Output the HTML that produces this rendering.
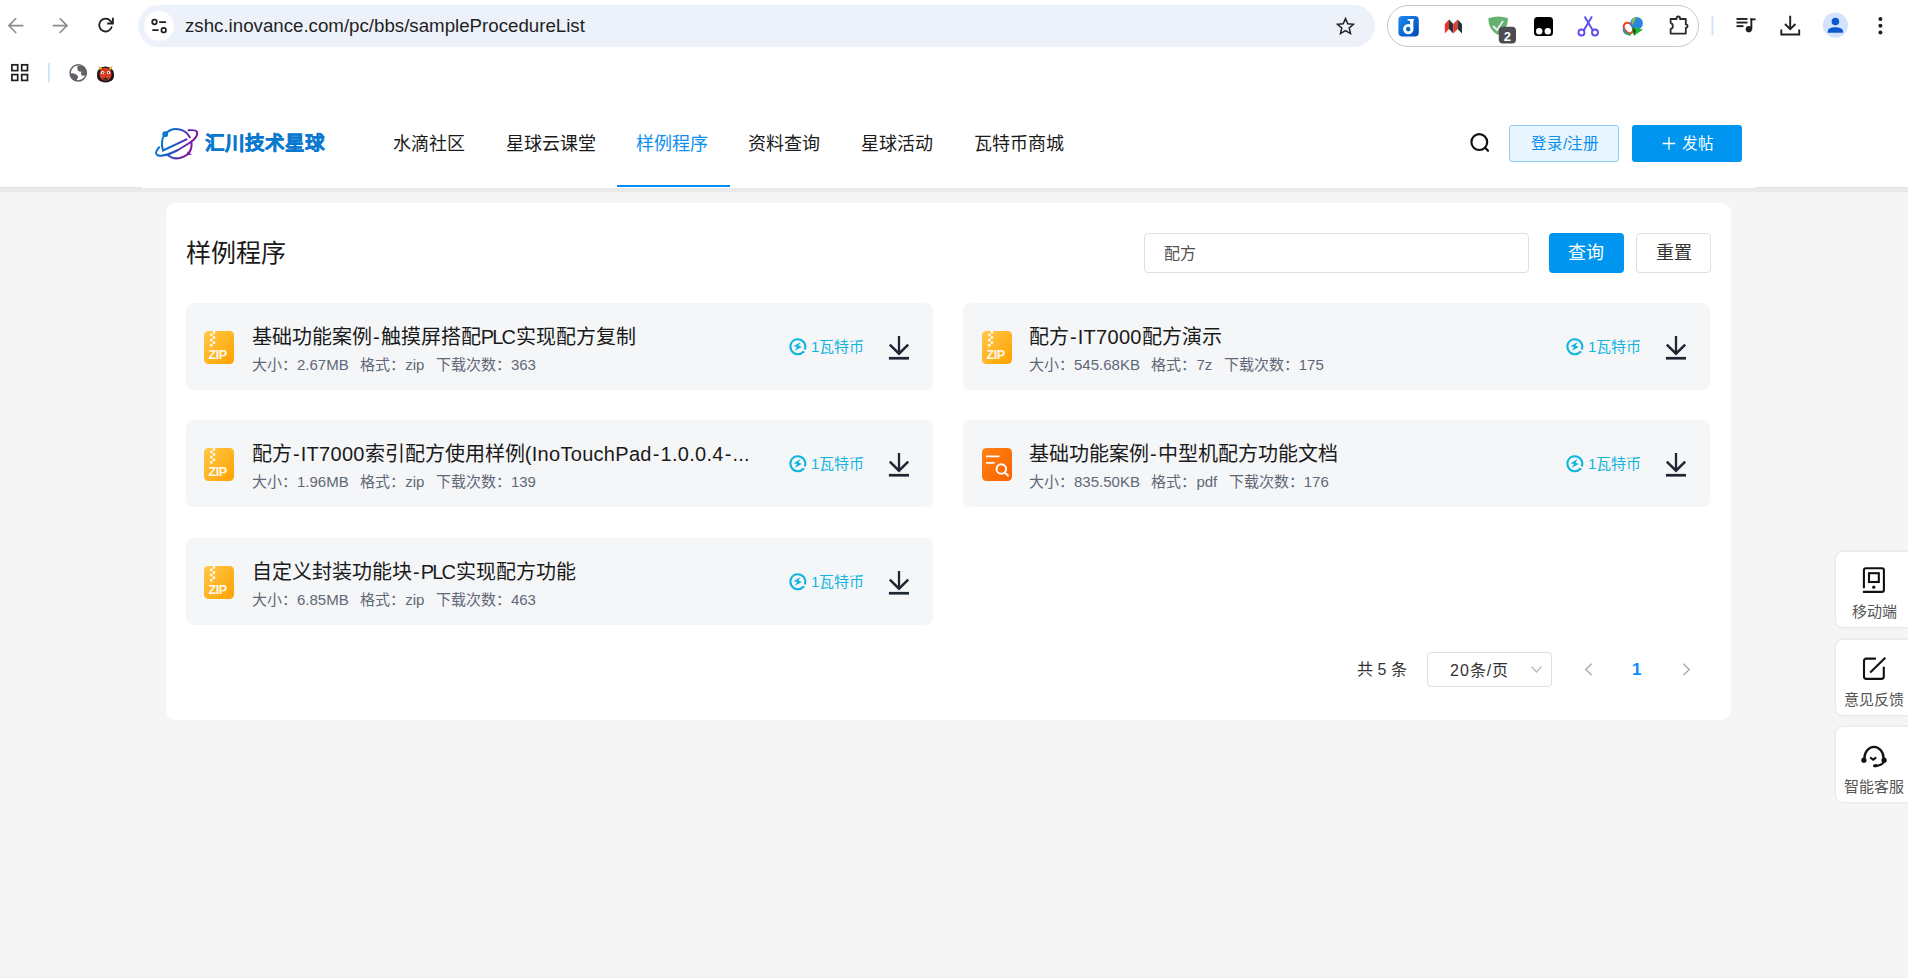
<!DOCTYPE html>
<html lang="zh-CN"><head><meta charset="utf-8">
<style>
*{margin:0;padding:0;box-sizing:border-box}
html,body{width:1908px;height:978px;overflow:hidden;background:#f5f5f5;font-family:"Liberation Sans",sans-serif;color:#1a1a1a}
.a{position:absolute}
.nw{white-space:nowrap}
#chrome{left:0;top:0;width:1908px;height:88px;background:#fff}
#hdr{left:0;top:88px;width:1908px;height:100px;background:#fff;border-bottom:1px solid #e2e2e2}
#hdrin{left:142px;top:88px;width:1613px;height:100px;background:#fff}
#band{left:0;top:188px;width:1908px;height:4px;background:#eaeaea}
.nav{top:132px;font-size:18px;line-height:24px;color:#1a1a1a}
#card{left:166px;top:203px;width:1565px;height:517px;background:#fff;border-radius:10px}
.item{width:747px;height:87px;background:#f5f6f8;border-radius:8px}
.ttl{font-size:20px;line-height:26px;color:#1a1a1a}
.lt{letter-spacing:0.3px}
.hy{margin:0 1px}
.plc{letter-spacing:-1.8px;margin-right:1.5px}
.meta{font-size:15px;line-height:20px;color:#5f6877}
.coin{font-size:15px;color:#12b4de}
.side{left:1835px;width:90px;height:77px;background:#fff;border-radius:8px;border:1px solid #e9e9e9;box-shadow:0 0 3px rgba(0,0,0,0.04)}
</style></head><body>
<div id="chrome" class="a">
<svg class="a" style="left:0;top:0" width="1908" height="88" viewBox="0 0 1908 88">
  <!-- back / forward -->
  <g fill="none" stroke="#8c8c8c" stroke-width="1.6" stroke-linecap="square">
    <path d="M9 25.6H22.5M15.6 18.8L9 25.6L15.6 32.4"/>
    <path d="M53.5 25.6H67M60.2 18.8L67 25.6L60.2 32.4"/>
  </g>
  <!-- reload -->
  <g fill="none" stroke="#1f1f1f" stroke-width="1.8">
    <path d="M111.9 26.4A6.4 6.4 0 1 1 110.4 20.8L112.6 23"/>
    <path d="M107.2 23.5H112.9V17.8"/>
  </g>
  <rect x="138" y="5" width="1237" height="42" rx="21" fill="#edf2fa"/>
  <circle cx="159" cy="26" r="15" fill="#fff"/>
  <g fill="none" stroke="#1f1f1f" stroke-width="1.7">
    <circle cx="154.5" cy="22" r="2.3"/>
    <circle cx="163.7" cy="30.2" r="2.3"/>
    <path d="M159.2 22.2H166M152.3 30.2H158.6"/>
  </g>
  <!-- star -->
  <g transform="translate(1345.5 26.3) scale(0.95) translate(-1345.5 -26.3)"><path d="M1345.5 18.2L1347.9 23.7L1353.9 24.2L1349.4 28.1L1350.8 34L1345.5 30.9L1340.2 34L1341.6 28.1L1337.1 24.2L1343.1 23.7Z" fill="none" stroke="#1f1f1f" stroke-width="1.55" stroke-linejoin="miter"/></g>
  <!-- extensions pill -->
  <rect x="1387.5" y="5.5" width="311" height="41" rx="20.5" fill="none" stroke="#c7c7c7" stroke-width="1"/>
  <!-- J -->
  <defs><linearGradient id="jg" x1="0" y1="0" x2="1" y2="1"><stop offset="0" stop-color="#1d8cf0"/><stop offset="1" stop-color="#0048b8"/></linearGradient></defs>
  <rect x="1398.4" y="16" width="20.4" height="20.6" rx="4" fill="url(#jg)"/>
  <circle cx="1408.3" cy="29.1" r="3.8" fill="none" stroke="#fff" stroke-width="2.8"/>
  <rect x="1410" y="19" width="3.3" height="10" fill="#fff"/>
  <rect x="1407.6" y="19" width="6.3" height="1.7" fill="#fff"/>
  <!-- M -->
  <path d="M1444.8 33.5L1444.8 24L1449 19.5L1449 29Z" fill="#e8382d"/>
  <path d="M1449 19.5L1453.3 24L1453.3 33.5L1449 29Z" fill="#2b2f38"/>
  <path d="M1453.3 24L1457.6 19.5L1457.6 29L1453.3 33.5Z" fill="#e8382d"/>
  <path d="M1457.6 19.5L1462 24L1462 33.5L1457.6 29Z" fill="#2b2f38"/>
  <!-- shield -->
  <path d="M1488.3 18.3Q1498 14.8 1508 18.3Q1508 30 1498 35Q1488.3 30 1488.3 18.3Z" fill="#66b16f"/>
  <path d="M1493 26L1497 30L1503 21" fill="none" stroke="#e9f3ea" stroke-width="1.8"/>
  <rect x="1498.8" y="26.8" width="17.2" height="16.8" rx="4" fill="#4b4d52"/>
  <text x="1507.4" y="40.8" font-family="Liberation Sans" font-weight="bold" font-size="13" fill="#fff" text-anchor="middle">2</text>
  <!-- tampermonkey -->
  <rect x="1534" y="17" width="19" height="19" rx="3.5" fill="#000"/>
  <circle cx="1539.2" cy="31.2" r="3.2" fill="#fff"/>
  <circle cx="1547.8" cy="31.2" r="3.2" fill="#fff"/>
  <!-- scissors -->
  <g fill="none" stroke="#5b4cf5" stroke-width="1.9">
    <circle cx="1581.5" cy="32.5" r="3"/>
    <circle cx="1595" cy="32.5" r="3"/>
    <path d="M1583.8 30.2L1592 16.4M1592.8 30.2L1584.6 16.4"/>
  </g>
  <!-- IDM -->
  <ellipse cx="1628.5" cy="28" rx="4.2" ry="5.6" transform="rotate(-35 1628.5 28)" fill="none" stroke="#e8451c" stroke-width="2.2"/>
  <path d="M1623.5 30Q1625 34.5 1631 34.6" fill="none" stroke="#2bb24c" stroke-width="2.2"/>
  <path d="M1623.4 27.5Q1623 32 1628 34" fill="none" stroke="#3a7be0" stroke-width="1.2"/>
  <circle cx="1636.6" cy="23.3" r="6.3" fill="#2f86de"/>
  <path d="M1631.5 21Q1633 17.5 1636.5 17.2Q1634.5 21 1632.5 25Z" fill="#8cbf3a"/>
  <path d="M1632.3 27L1643 29.5L1634 35.8Z" fill="#1fb82e"/>
  <path d="M1632.3 27L1636 30.5L1634 35.8Z" fill="#0a5a14"/>
  <!-- puzzle -->
  <path d="M1670.6 19H1676.6V18.2A1.7 1.7 0 0 1 1680 18.2V19H1685.8V24.4A1.7 1.7 0 0 1 1685.8 27.8V33.6H1670.6V29.2A3.4 3.4 0 0 0 1670.6 22.8Z" fill="none" stroke="#2a2a2a" stroke-width="1.8" stroke-linejoin="round"/>
  <!-- separator -->
  <rect x="1711.5" y="16" width="2" height="19.5" rx="1" fill="#d3e3fd"/>
  <!-- queue music -->
  <g fill="#1f1f1f">
    <rect x="1736.5" y="18" width="11" height="1.9"/>
    <rect x="1736.5" y="21.6" width="11" height="1.9"/>
    <rect x="1736.5" y="25.2" width="7" height="1.9"/>
    <rect x="1750.4" y="18.4" width="1.9" height="11"/>
    <rect x="1750.4" y="18.4" width="5.2" height="1.9"/>
    <circle cx="1748.8" cy="29.2" r="3.1"/>
  </g>
  <!-- download -->
  <g fill="none" stroke="#1f1f1f" stroke-width="1.9">
    <path d="M1790.2 15.8V29M1785 24L1790.2 29.2L1795.4 24"/>
    <path d="M1781.3 29.5V34.5H1799.2V29.5"/>
  </g>
  <!-- profile -->
  <circle cx="1835.4" cy="25.2" r="12.6" fill="#d3e3fd"/>
  <circle cx="1835.4" cy="21.5" r="3.8" fill="#0b57d0"/>
  <path d="M1827.8 32.8V31.2Q1827.8 27.6 1835.4 27.3Q1843 27.6 1843 31.2V32.8Z" fill="#0b57d0"/>
  <!-- menu -->
  <g fill="#1f1f1f"><circle cx="1880.4" cy="19" r="2"/><circle cx="1880.4" cy="25.8" r="2"/><circle cx="1880.4" cy="32.6" r="2"/></g>
  <!-- bookmarks bar -->
  <g fill="none" stroke="#1f1f1f" stroke-width="1.7">
    <rect x="11.9" y="64.8" width="5.8" height="5.8"/>
    <rect x="21.7" y="64.8" width="5.8" height="5.8"/>
    <rect x="11.9" y="74.6" width="5.8" height="5.8"/>
    <rect x="21.7" y="74.6" width="5.8" height="5.8"/>
  </g>
  <rect x="48" y="63" width="2" height="19.5" rx="1" fill="#d3e3fd"/>
  <circle cx="78.2" cy="72.9" r="8.1" fill="#fff" stroke="#5f6368" stroke-width="1.5"/>
  <path d="M77.2 66.6Q80.5 64.8 84.2 66.6Q86.6 69.5 86.4 74.8Q84.2 76.2 81.6 75.4Q80.2 73.6 81.6 71.8Q79.2 71.8 77.6 70.2Z" fill="#5f6368"/>
  <path d="M70.2 73.4Q73.2 72.6 76.2 74.4Q78.6 75.8 78.2 77.8Q76.4 78.6 76.8 81.2Q72.2 80.6 70.2 76.6Z" fill="#5f6368"/>
  <path d="M97 74Q97.5 67 105.5 66.5Q113.5 67 114 74Q114.5 80 110 81.5Q105.5 83.5 101 81.5Q96.5 80 97 74Z" fill="#1a1a1a"/>
  <path d="M98.5 66L100 70.5L102.5 68.5ZM112.5 66L111 70.5L108.5 68.5Z" fill="#e6a820"/>
  <ellipse cx="105.5" cy="74.2" rx="6" ry="6.4" fill="#e23a22"/>
  <circle cx="102.6" cy="72.6" r="1.7" fill="#fff"/><circle cx="108.6" cy="72.6" r="1.7" fill="#fff"/>
  <circle cx="102.8" cy="72.7" r="0.7" fill="#111"/><circle cx="108.4" cy="72.7" r="0.7" fill="#111"/>
  <path d="M102.5 77.6H108.5L107.5 79.4H103.5Z" fill="#1a1a1a"/>
  <path d="M103.3 77.6L104 78.6L104.7 77.6ZM106.3 77.6L107 78.6L107.7 77.6Z" fill="#fff"/>
</svg>
<div class="a nw" style="left:185px;top:14px;font-size:18.7px;line-height:24px;color:#1f1f1f">zshc.inovance.com/pc/bbs/sampleProcedureList</div>
</div>
<div id="hdr" class="a"></div>
<div id="hdrin" class="a"></div>
<div id="band" class="a"></div>
<svg class="a" style="left:150px;top:123px" width="52" height="40" viewBox="0 0 52 40">
  <defs><linearGradient id="lg" gradientUnits="userSpaceOnUse" x1="10" y1="12" x2="44" y2="26"><stop offset="0" stop-color="#0a7ad8"/><stop offset="0.4" stop-color="#1560c8"/><stop offset="0.75" stop-color="#6a20a8"/><stop offset="1" stop-color="#8a0c9c"/></linearGradient></defs>
  <g fill="none" stroke="url(#lg)" stroke-width="2" stroke-linecap="round">
    <path d="M39.8 14.3A15 15 0 0 0 15.2 11.2"/>
    <path d="M15.2 11.2Q10 17 13 27.5L36.5 16.3"/>
    <path d="M17.6 32Q23 36.5 30 35Q37 33 39.5 29"/>
    <path d="M41.2 18.5Q42.5 24 39.5 29"/>
    <path d="M9.2 24.2Q3.8 30 7.5 32.3Q13 34.5 28 27L41 19Q48.5 13.5 47 8.8Q45.5 6.6 38.6 7.3"/>
  </g>
  <circle cx="15.2" cy="11.2" r="2.9" fill="#0a7ad8"/>
  <path d="M37.5 28.5L41.8 31.8L36.5 32.2Z" fill="#7a1ca0"/>
</svg>
<div class="a nw" style="left:205px;top:130px;font-size:19.5px;line-height:26px;font-weight:bold;-webkit-text-stroke:0.55px #0b78cf;color:#0b78cf">汇川技术星球</div>
<div class="a nav nw" style="left:393px">水滴社区</div>
<div class="a nav nw" style="left:506px">星球云课堂</div>
<div class="a nav nw" style="left:636px;color:#0a8ff0">样例程序</div>
<div class="a nav nw" style="left:748px">资料查询</div>
<div class="a nav nw" style="left:861px">星球活动</div>
<div class="a nav nw" style="left:974px">瓦特币商城</div>
<div class="a" style="left:617px;top:185px;width:113px;height:2px;background:#008cf0"></div>
<svg class="a" style="left:1466px;top:129px" width="28" height="28" viewBox="0 0 28 28">
  <circle cx="13.3" cy="13.1" r="7.9" fill="none" stroke="#111" stroke-width="2.2"/>
  <path d="M19.2 18.8L22 21.7" stroke="#111" stroke-width="2.3" stroke-linecap="round"/>
</svg>
<div class="a" style="left:1509px;top:125px;width:110px;height:37px;border:1px solid #8fcdf8;background:#e8f5fe;border-radius:3px"></div>
<div class="a nw" style="left:1531px;top:133.5px;font-size:15.5px;line-height:20px;color:#0a8ff0">登录/注册</div>
<div class="a" style="left:1632px;top:125px;width:110px;height:37px;background:#0096f0;border-radius:3px"></div>
<svg class="a" style="left:1662px;top:137px" width="14" height="14" viewBox="0 0 14 14"><path d="M0.6 6.5H13.2M7 0V12.8" stroke="#fff" stroke-width="1.3"/></svg>
<div class="a nw" style="left:1682px;top:133.5px;font-size:15.5px;line-height:20px;color:#fff">发帖</div>

<div id="card" class="a"></div>
<div class="a nw" style="left:186px;top:237px;font-size:25px;line-height:32px">样例程序</div>
<div class="a" style="left:1144px;top:233px;width:385px;height:40px;border:1px solid #dcdfe6;border-radius:4px;background:#fff"></div>
<div class="a nw" style="left:1164px;top:243px;font-size:16px;line-height:22px;color:#505050">配方</div>
<div class="a" style="left:1549px;top:233px;width:75px;height:40px;background:#0096f0;border-radius:4px"></div>
<div class="a nw" style="left:1568px;top:241px;font-size:18px;line-height:24px;color:#fff">查询</div>
<div class="a" style="left:1636px;top:233px;width:75px;height:40px;border:1px solid #dcdfe6;border-radius:4px;background:#fff"></div>
<div class="a nw" style="left:1656px;top:241px;font-size:18px;line-height:24px;color:#333">重置</div>
<div class="a item" style="left:186px;top:303px"></div>
<svg class="a" style="left:204px;top:331px" width="30" height="33" viewBox="0 0 30 33">
  <defs><linearGradient id="zg" x1="0" y1="0" x2="1" y2="1"><stop offset="0" stop-color="#ffc84a"/><stop offset="1" stop-color="#ffa200"/></linearGradient></defs>
  <rect x="0" y="0" width="30" height="33" rx="4.5" fill="url(#zg)"/>
  <g fill="#fff" opacity="0.85"><rect x="8.6" y="0" width="2.6" height="2.6"/><rect x="6" y="2.6" width="2.6" height="2.6"/><rect x="8.6" y="5.2" width="2.6" height="2.6"/><rect x="6" y="7.8" width="2.6" height="2.6"/><rect x="8.6" y="10.4" width="2.6" height="2.6"/><rect x="6" y="13" width="2.6" height="2.6"/></g>
  <text x="4.6" y="28.2" font-family="Liberation Sans" font-weight="bold" font-size="12.6" letter-spacing="-0.5" fill="#fff" opacity="0.92">ZIP</text>
</svg>
<div class="a ttl nw" style="left:252px;top:324px">基础功能案例<span class="hy">-</span>触摸屏搭配<span class="plc">PLC</span>实现配方复制</div>
<div class="a meta nw" style="left:252px;top:355px"><span style="margin-right:11.5px">大小：2.67MB</span><span style="margin-right:11.5px">格式：zip</span>下载次数：363</div>
<svg class="a" style="left:788px;top:337px" width="20" height="20" viewBox="0 1.1 20 20">
  <path d="M15.6 15.6A7.5 7.5 0 1 1 16.8 13.6" fill="none" stroke="#10b5df" stroke-width="2"/><path d="M14.6 15.2L17.2 16.2L15.6 17.2Z" fill="#10b5df"/>
  <path d="M12.7 6.2L5.5 10.3L9.1 11.2L6.8 14.8L13.8 11.2L10.5 9.6Z" fill="#10b5df"/>
</svg>
<div class="a coin nw" style="left:811px;top:337px;line-height:20px">1瓦特币</div>
<svg class="a" style="left:888px;top:335px" width="22" height="26" viewBox="0 0 22 26">
  <path d="M11 1V18.3" fill="none" stroke="#1e2533" stroke-width="2.3"/><path d="M1.8 9.6L11 18.7L20.2 9.6" fill="none" stroke="#1e2533" stroke-width="2.5"/>
  <rect x="0.9" y="21.9" width="20.1" height="2.7" fill="#1e2533"/>
</svg>
<div class="a item" style="left:963px;top:303px"></div>
<svg class="a" style="left:982px;top:331px" width="30" height="33" viewBox="0 0 30 33">
  <defs><linearGradient id="zg" x1="0" y1="0" x2="1" y2="1"><stop offset="0" stop-color="#ffc84a"/><stop offset="1" stop-color="#ffa200"/></linearGradient></defs>
  <rect x="0" y="0" width="30" height="33" rx="4.5" fill="url(#zg)"/>
  <g fill="#fff" opacity="0.85"><rect x="8.6" y="0" width="2.6" height="2.6"/><rect x="6" y="2.6" width="2.6" height="2.6"/><rect x="8.6" y="5.2" width="2.6" height="2.6"/><rect x="6" y="7.8" width="2.6" height="2.6"/><rect x="8.6" y="10.4" width="2.6" height="2.6"/><rect x="6" y="13" width="2.6" height="2.6"/></g>
  <text x="4.6" y="28.2" font-family="Liberation Sans" font-weight="bold" font-size="12.6" letter-spacing="-0.5" fill="#fff" opacity="0.92">ZIP</text>
</svg>
<div class="a ttl nw" style="left:1029px;top:324px">配方<span class="hy">-</span><span class="lt">IT7000</span>配方演示</div>
<div class="a meta nw" style="left:1029px;top:355px"><span style="margin-right:11.5px">大小：545.68KB</span><span style="margin-right:11.5px">格式：7z</span>下载次数：175</div>
<svg class="a" style="left:1565px;top:337px" width="20" height="20" viewBox="0 1.1 20 20">
  <path d="M15.6 15.6A7.5 7.5 0 1 1 16.8 13.6" fill="none" stroke="#10b5df" stroke-width="2"/><path d="M14.6 15.2L17.2 16.2L15.6 17.2Z" fill="#10b5df"/>
  <path d="M12.7 6.2L5.5 10.3L9.1 11.2L6.8 14.8L13.8 11.2L10.5 9.6Z" fill="#10b5df"/>
</svg>
<div class="a coin nw" style="left:1588px;top:337px;line-height:20px">1瓦特币</div>
<svg class="a" style="left:1665px;top:335px" width="22" height="26" viewBox="0 0 22 26">
  <path d="M11 1V18.3" fill="none" stroke="#1e2533" stroke-width="2.3"/><path d="M1.8 9.6L11 18.7L20.2 9.6" fill="none" stroke="#1e2533" stroke-width="2.5"/>
  <rect x="0.9" y="21.9" width="20.1" height="2.7" fill="#1e2533"/>
</svg>
<div class="a item" style="left:186px;top:420px"></div>
<svg class="a" style="left:204px;top:448px" width="30" height="33" viewBox="0 0 30 33">
  <defs><linearGradient id="zg" x1="0" y1="0" x2="1" y2="1"><stop offset="0" stop-color="#ffc84a"/><stop offset="1" stop-color="#ffa200"/></linearGradient></defs>
  <rect x="0" y="0" width="30" height="33" rx="4.5" fill="url(#zg)"/>
  <g fill="#fff" opacity="0.85"><rect x="8.6" y="0" width="2.6" height="2.6"/><rect x="6" y="2.6" width="2.6" height="2.6"/><rect x="8.6" y="5.2" width="2.6" height="2.6"/><rect x="6" y="7.8" width="2.6" height="2.6"/><rect x="8.6" y="10.4" width="2.6" height="2.6"/><rect x="6" y="13" width="2.6" height="2.6"/></g>
  <text x="4.6" y="28.2" font-family="Liberation Sans" font-weight="bold" font-size="12.6" letter-spacing="-0.5" fill="#fff" opacity="0.92">ZIP</text>
</svg>
<div class="a ttl nw" style="left:252px;top:441px">配方<span class="hy">-</span><span class="lt">IT7000</span>索引配方使用样例<span class="lt">(InoTouchPad</span><span class="hy">-</span><span class="lt">1.0.0.4</span><span class="hy">-</span><span class="lt">...</span></div>
<div class="a meta nw" style="left:252px;top:472px"><span style="margin-right:11.5px">大小：1.96MB</span><span style="margin-right:11.5px">格式：zip</span>下载次数：139</div>
<svg class="a" style="left:788px;top:454px" width="20" height="20" viewBox="0 1.1 20 20">
  <path d="M15.6 15.6A7.5 7.5 0 1 1 16.8 13.6" fill="none" stroke="#10b5df" stroke-width="2"/><path d="M14.6 15.2L17.2 16.2L15.6 17.2Z" fill="#10b5df"/>
  <path d="M12.7 6.2L5.5 10.3L9.1 11.2L6.8 14.8L13.8 11.2L10.5 9.6Z" fill="#10b5df"/>
</svg>
<div class="a coin nw" style="left:811px;top:454px;line-height:20px">1瓦特币</div>
<svg class="a" style="left:888px;top:452px" width="22" height="26" viewBox="0 0 22 26">
  <path d="M11 1V18.3" fill="none" stroke="#1e2533" stroke-width="2.3"/><path d="M1.8 9.6L11 18.7L20.2 9.6" fill="none" stroke="#1e2533" stroke-width="2.5"/>
  <rect x="0.9" y="21.9" width="20.1" height="2.7" fill="#1e2533"/>
</svg>
<div class="a item" style="left:963px;top:420px"></div>
<svg class="a" style="left:982px;top:448px" width="30" height="33" viewBox="0 0 30 33">
  <defs><linearGradient id="pg" x1="0" y1="0" x2="1" y2="1"><stop offset="0" stop-color="#ff8214"/><stop offset="1" stop-color="#f96400"/></linearGradient></defs>
  <rect x="0" y="0" width="30" height="33" rx="4.5" fill="url(#pg)"/>
  <rect x="4" y="7.5" width="13.5" height="1.7" fill="#fff"/>
  <rect x="4" y="14" width="8.5" height="1.7" fill="#fff"/>
  <circle cx="19.3" cy="21" r="4.8" fill="none" stroke="#fff" stroke-width="1.9"/>
  <path d="M22.6 24.4L26 27.6" stroke="#fff" stroke-width="2" stroke-linecap="round"/>
</svg>
<div class="a ttl nw" style="left:1029px;top:441px">基础功能案例<span class="hy">-</span>中型机配方功能文档</div>
<div class="a meta nw" style="left:1029px;top:472px"><span style="margin-right:11.5px">大小：835.50KB</span><span style="margin-right:11.5px">格式：pdf</span>下载次数：176</div>
<svg class="a" style="left:1565px;top:454px" width="20" height="20" viewBox="0 1.1 20 20">
  <path d="M15.6 15.6A7.5 7.5 0 1 1 16.8 13.6" fill="none" stroke="#10b5df" stroke-width="2"/><path d="M14.6 15.2L17.2 16.2L15.6 17.2Z" fill="#10b5df"/>
  <path d="M12.7 6.2L5.5 10.3L9.1 11.2L6.8 14.8L13.8 11.2L10.5 9.6Z" fill="#10b5df"/>
</svg>
<div class="a coin nw" style="left:1588px;top:454px;line-height:20px">1瓦特币</div>
<svg class="a" style="left:1665px;top:452px" width="22" height="26" viewBox="0 0 22 26">
  <path d="M11 1V18.3" fill="none" stroke="#1e2533" stroke-width="2.3"/><path d="M1.8 9.6L11 18.7L20.2 9.6" fill="none" stroke="#1e2533" stroke-width="2.5"/>
  <rect x="0.9" y="21.9" width="20.1" height="2.7" fill="#1e2533"/>
</svg>
<div class="a item" style="left:186px;top:538px"></div>
<svg class="a" style="left:204px;top:566px" width="30" height="33" viewBox="0 0 30 33">
  <defs><linearGradient id="zg" x1="0" y1="0" x2="1" y2="1"><stop offset="0" stop-color="#ffc84a"/><stop offset="1" stop-color="#ffa200"/></linearGradient></defs>
  <rect x="0" y="0" width="30" height="33" rx="4.5" fill="url(#zg)"/>
  <g fill="#fff" opacity="0.85"><rect x="8.6" y="0" width="2.6" height="2.6"/><rect x="6" y="2.6" width="2.6" height="2.6"/><rect x="8.6" y="5.2" width="2.6" height="2.6"/><rect x="6" y="7.8" width="2.6" height="2.6"/><rect x="8.6" y="10.4" width="2.6" height="2.6"/><rect x="6" y="13" width="2.6" height="2.6"/></g>
  <text x="4.6" y="28.2" font-family="Liberation Sans" font-weight="bold" font-size="12.6" letter-spacing="-0.5" fill="#fff" opacity="0.92">ZIP</text>
</svg>
<div class="a ttl nw" style="left:252px;top:559px">自定义封装功能块<span class="hy">-</span><span class="plc">PLC</span>实现配方功能</div>
<div class="a meta nw" style="left:252px;top:590px"><span style="margin-right:11.5px">大小：6.85MB</span><span style="margin-right:11.5px">格式：zip</span>下载次数：463</div>
<svg class="a" style="left:788px;top:572px" width="20" height="20" viewBox="0 1.1 20 20">
  <path d="M15.6 15.6A7.5 7.5 0 1 1 16.8 13.6" fill="none" stroke="#10b5df" stroke-width="2"/><path d="M14.6 15.2L17.2 16.2L15.6 17.2Z" fill="#10b5df"/>
  <path d="M12.7 6.2L5.5 10.3L9.1 11.2L6.8 14.8L13.8 11.2L10.5 9.6Z" fill="#10b5df"/>
</svg>
<div class="a coin nw" style="left:811px;top:572px;line-height:20px">1瓦特币</div>
<svg class="a" style="left:888px;top:570px" width="22" height="26" viewBox="0 0 22 26">
  <path d="M11 1V18.3" fill="none" stroke="#1e2533" stroke-width="2.3"/><path d="M1.8 9.6L11 18.7L20.2 9.6" fill="none" stroke="#1e2533" stroke-width="2.5"/>
  <rect x="0.9" y="21.9" width="20.1" height="2.7" fill="#1e2533"/>
</svg>

<div class="a nw" style="left:1357px;top:659px;font-size:16px;line-height:22px;color:#333">共 5 条</div>
<div class="a" style="left:1427px;top:652px;width:125px;height:35px;border:1px solid #dcdfe6;border-radius:4px;background:#fff"></div>
<div class="a nw" style="left:1450px;top:660px;font-size:16px;line-height:22px;letter-spacing:1px;color:#333">20条/页</div>
<svg class="a" style="left:1530px;top:665px" width="13" height="9" viewBox="0 0 13 9"><path d="M1.5 1.5L6.5 7L11.5 1.5" fill="none" stroke="#b4b9c2" stroke-width="1.3"/></svg>
<svg class="a" style="left:1583px;top:662px" width="11" height="15" viewBox="0 0 11 15"><path d="M8.6 1.8L2.8 7.5L8.6 13.2" fill="none" stroke="#a9afb9" stroke-width="1.5"/></svg>
<div class="a nw" style="left:1632px;top:659px;font-size:17px;line-height:22px;font-weight:bold;color:#0a8ff0">1</div>
<svg class="a" style="left:1681px;top:662px" width="11" height="15" viewBox="0 0 11 15"><path d="M2.4 1.8L8.2 7.5L2.4 13.2" fill="none" stroke="#a9afb9" stroke-width="1.5"/></svg>

<div class="a side" style="top:551px"></div>
<div class="a side" style="top:639px"></div>
<div class="a side" style="top:726px"></div>
<svg class="a" style="left:1860px;top:565px" width="26" height="30" viewBox="0 0 26 30">
  <path d="M3.9 23.3V5.3Q3.9 3.3 5.9 3.3H21.9Q23.9 3.3 23.9 5.3V24.9Q23.9 26.9 21.9 26.9H2.9" fill="none" stroke="#111" stroke-width="2.1"/>
  <rect x="9" y="8.2" width="9.8" height="8.8" fill="none" stroke="#111" stroke-width="2.1"/>
  <circle cx="13.8" cy="22.2" r="1.6" fill="#111"/>
</svg>
<div class="a nw" style="left:1852px;top:602px;font-size:15px;line-height:20px;color:#555">移动端</div>
<svg class="a" style="left:1860px;top:655px" width="28" height="28" viewBox="0 0 28 28">
  <path d="M15.9 3.6H6.4Q4 3.6 4 6V21.5Q4 23.9 6.4 23.9H21.4Q23.8 23.9 23.8 21.5V11.8" fill="none" stroke="#111" stroke-width="2.1"/>
  <path d="M10.2 17.4L25.3 2.8" fill="none" stroke="#111" stroke-width="2.1"/>
</svg>
<div class="a nw" style="left:1844px;top:690px;font-size:15px;line-height:20px;color:#555">意见反馈</div>
<svg class="a" style="left:1859px;top:742px" width="30" height="28" viewBox="0 0 30 28">
  <path d="M5.4 16.5A9.6 11.6 0 0 1 24.6 16.5" fill="none" stroke="#111" stroke-width="2.3"/>
  <circle cx="4.9" cy="18.2" r="2.6" fill="#111"/>
  <circle cx="25.1" cy="18.2" r="2.6" fill="#111"/>
  <path d="M11.8 15.9L14.2 17.8L16.6 15.9" fill="none" stroke="#111" stroke-width="2" stroke-linecap="round"/>
  <path d="M24.8 19.5Q23.5 23.6 16 23.8" fill="none" stroke="#111" stroke-width="2.2"/>
  <rect x="14" y="22.3" width="4.6" height="3" rx="1.5" fill="#111"/>
</svg>
<div class="a nw" style="left:1844px;top:777px;font-size:15px;line-height:20px;color:#555">智能客服</div>
<div class="a" style="left:0;top:977px;width:1908px;height:1px;background:#eceef0"></div>
</body></html>
